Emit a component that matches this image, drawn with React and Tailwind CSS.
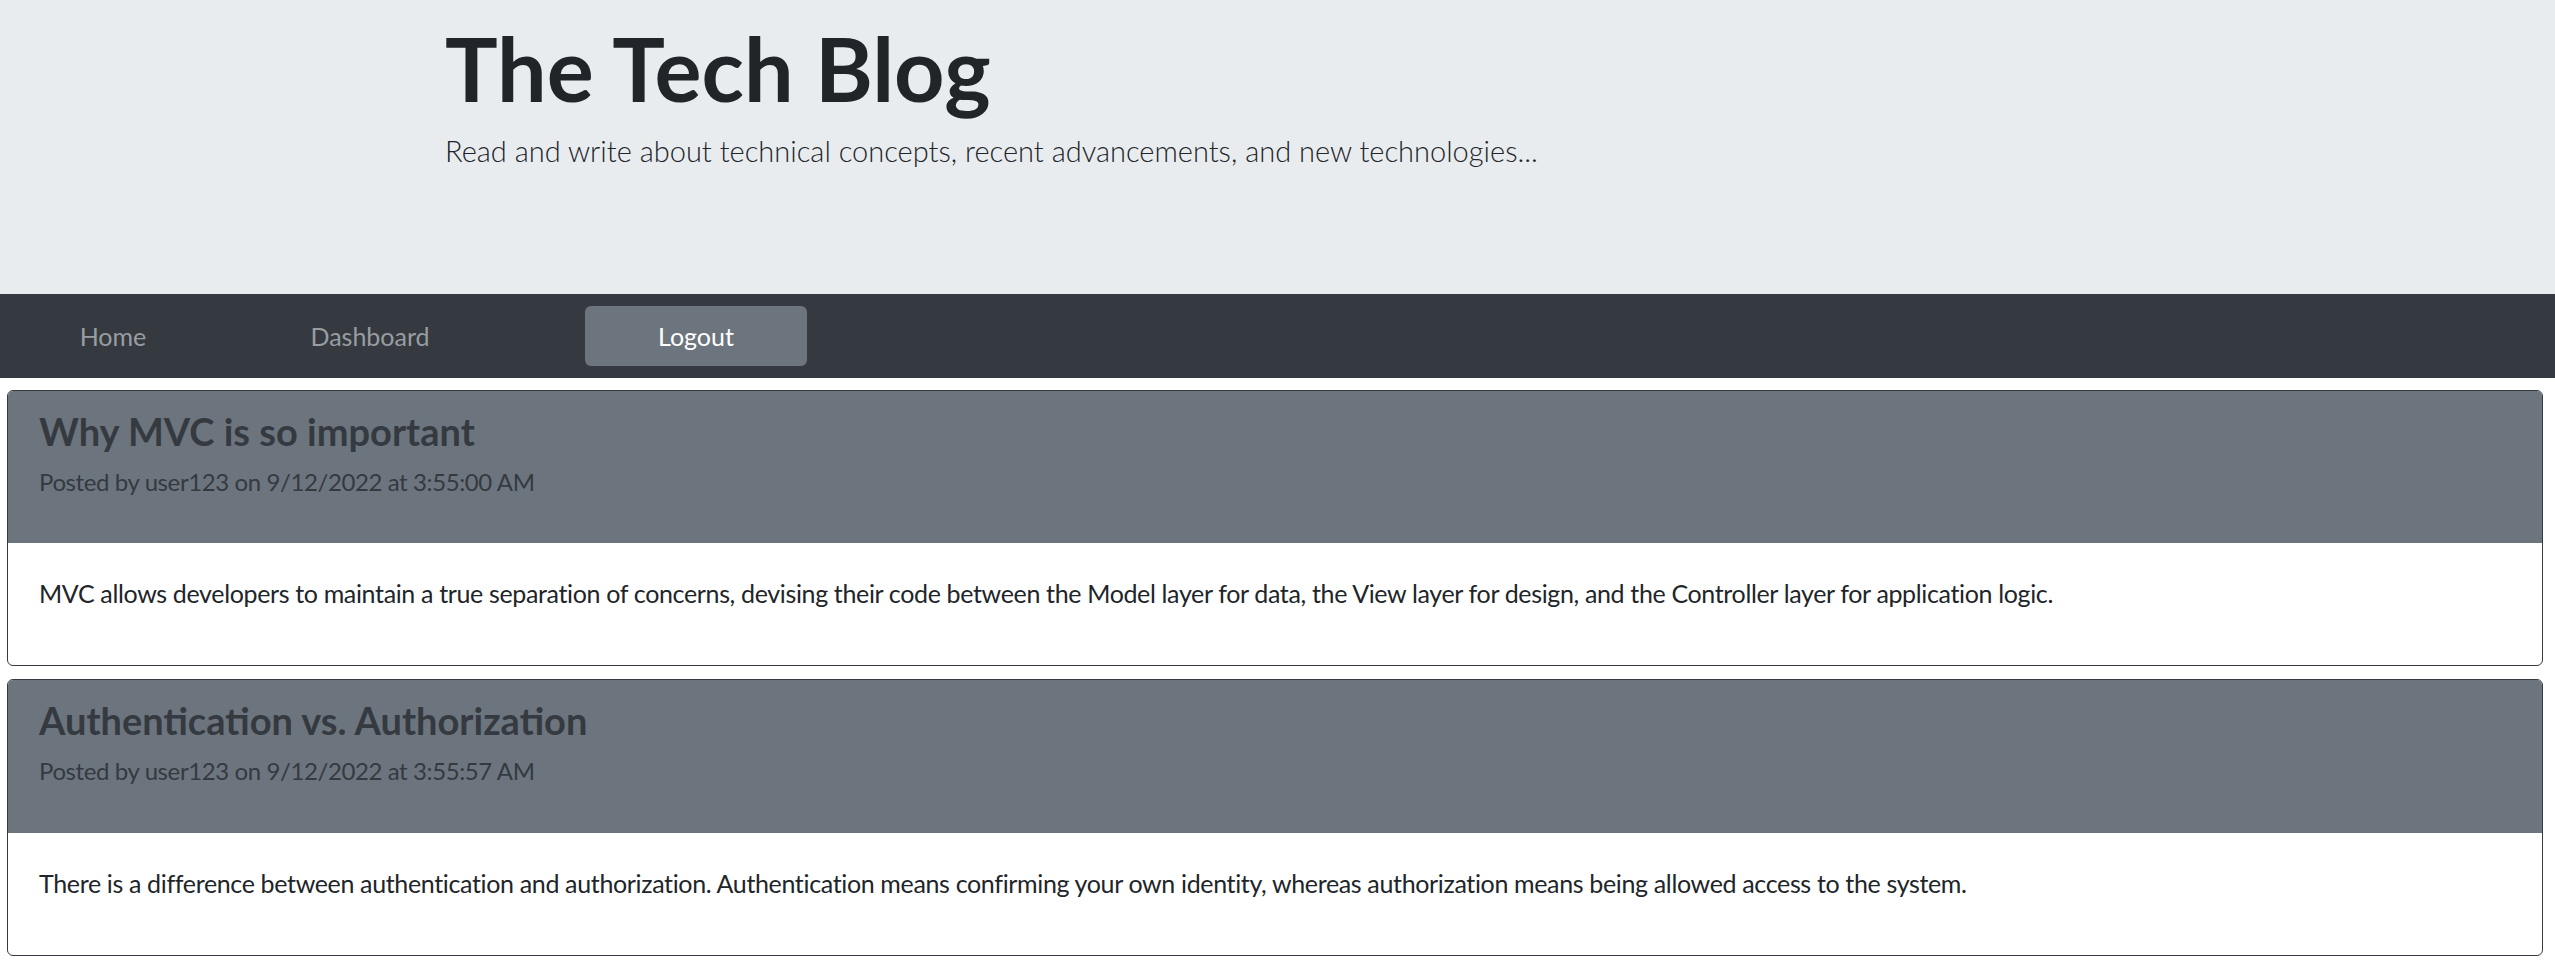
const posts = [
  {
    title: 'Why MVC is so important',
    meta: 'Posted by user123 on 9/12/2022 at 3:55:00 AM',
    body: 'MVC allows developers to maintain a true separation of concerns, devising their code between the Model layer for data, the View layer for design, and the Controller layer for application logic.',
  },
  {
    title: 'Authentication vs. Authorization',
    meta: 'Posted by user123 on 9/12/2022 at 3:55:57 AM',
    body: 'There is a difference between authentication and authorization. Authentication means confirming your own identity, whereas authorization means being allowed access to the system.',
  },
]

function PostCard({ post }) {
  return (
    <div className="ml-[7px] mr-[12px] border border-[#343a40] rounded-[6px] overflow-hidden bg-white">
      {/* header */}
      <div className="bg-[#6c757d] pl-[31px] pt-[18px] pb-[47px]">
        <h2 className="text-[38px] leading-[1.2] font-bold text-[#343a40]">{post.title}</h2>
        <p className="mt-[13px] text-[24px] leading-[1.2] tracking-[-0.4px] text-[#343a40]">{post.meta}</p>
      </div>
      {/* body */}
      <div className="pl-[31px] pt-[35px] pb-[57px]">
        <p className="text-[25px] leading-[1.2] tracking-[-0.35px] text-[#212529]">{post.body}</p>
      </div>
    </div>
  )
}

export default function App() {
  return (
    <div className="min-h-screen bg-white font-['Lato',sans-serif] text-[#212529]">
      {/* Jumbotron */}
      <header className="h-[294px] bg-[#e9ecef] pl-[445px] pt-[16px]">
        <h1 className="text-[88px] leading-[1.2] font-bold text-[#212529]">The Tech Blog</h1>
        <p className="mt-[12px] text-[29px] leading-[1.2] font-light text-[#212529]">
          Read and write about technical concepts, recent advancements, and new technologies...
        </p>
      </header>

      {/* Navbar */}
      <nav className="h-[84px] bg-[#343a40] flex items-center">
        <a className="w-[226px] text-center text-[25px] leading-[1.2] text-[#9a9da0]">Home</a>
        <a className="w-[288px] text-center text-[25px] leading-[1.2] text-[#9a9da0]">Dashboard</a>
        <button className="ml-[71px] w-[222px] h-[60px] rounded-[6px] bg-[#6c757d] text-white text-[25px] leading-[1.2]">
          Logout
        </button>
      </nav>

      <main className="pt-[12px] flex flex-col gap-[13px]">
        {posts.map((p) => (
          <PostCard key={p.title} post={p} />
        ))}
      </main>
    </div>
  )
}
